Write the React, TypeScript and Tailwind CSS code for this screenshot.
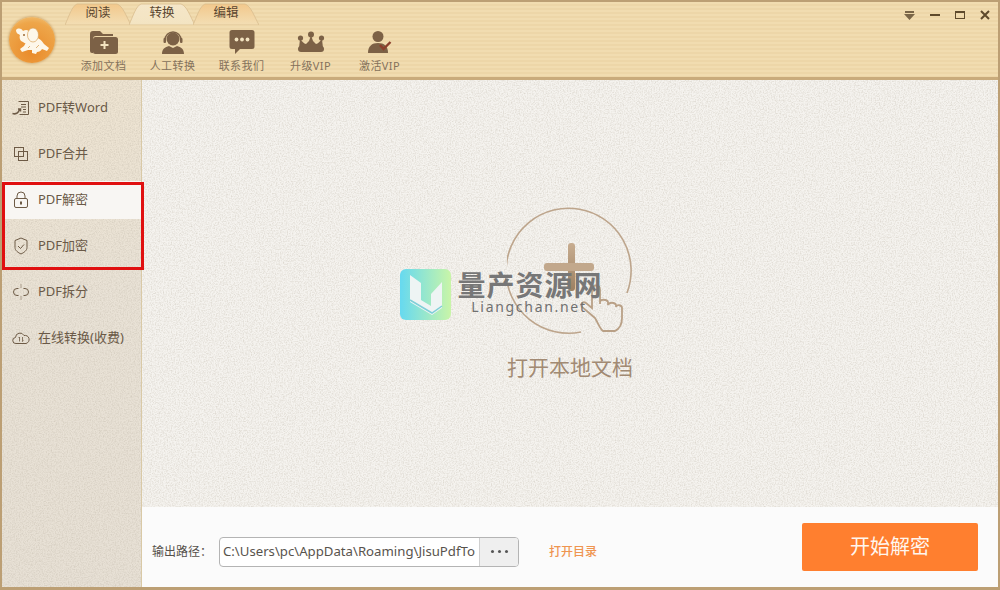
import React from 'react';

const font = "font-['Noto_Sans','Noto_Sans_CJK_SC',sans-serif]";

// paper grain used on the sidebar and the main panel
const Grain = ({ id }: { id: string }) => (
  <svg className="pointer-events-none absolute inset-0 h-full w-full">
    <filter id={id} x="0" y="0" width="100%" height="100%">
      <feTurbulence type="fractalNoise" baseFrequency="0.75" numOctaves="2" seed="4" />
      <feColorMatrix values="0 0 0 0 0.45  0 0 0 0 0.40  0 0 0 0 0.32  0.7 0 0 0 -0.27" />
    </filter>
    <rect width="100%" height="100%" filter={`url(#${id})`} />
  </svg>
);

const Tab = ({ label, active }: { label: string; active?: boolean }) => (
  <div className="relative -mr-[2px] flex h-[23px] w-[66px] items-center justify-center">
    <svg viewBox="0 0 66 23" className="absolute inset-0 h-full w-full">
      <defs>
        <linearGradient id="tabOff" x1="0" y1="0" x2="0" y2="1">
          <stop offset="0" stopColor="#f2c88c" />
          <stop offset="1" stopColor="#f3deb4" />
        </linearGradient>
        <linearGradient id="tabOn" x1="0" y1="0" x2="0" y2="1">
          <stop offset="0" stopColor="#f5e6c8" />
          <stop offset="1" stopColor="#f3e4c2" />
        </linearGradient>
      </defs>
      <path
        d="M0 23 C4 14 7 4 12 2 L52 2 C58 4 61 14 66 23 Z"
        fill={active ? 'url(#tabOn)' : 'url(#tabOff)'}
        stroke="#d9bd8e"
        strokeWidth="0.8"
      />
    </svg>
    <span className="relative text-[12.5px] leading-none text-[#5a4630]">{label}</span>
  </div>
);

const FolderIcon = () => (
  <svg width="30" height="26" viewBox="0 0 30 26">
    <path d="M1 5a3 3 0 0 1 3-3h7l3 3h10v2H7a3 3 0 0 0-3 3v14H3a2 2 0 0 1-2-2z" fill="#7c6146" />
    <rect x="4" y="8" width="25" height="17" rx="2.5" fill="#7c6146" />
    <path d="M15.500 12v8M11.500 16h8" stroke="#f3e3c0" strokeWidth="2" />
  </svg>
);

const AgentIcon = () => (
  <svg width="26" height="26" viewBox="0 0 26 26">
    <path d="M5 11a8 8 0 0 1 16 0" fill="none" stroke="#7c6146" strokeWidth="1.4" />
    <circle cx="13" cy="10" r="6.500" fill="#7c6146" />
    <rect x="3.500" y="9" width="2.500" height="5" rx="1" fill="#7c6146" />
    <rect x="20" y="9" width="2.500" height="5" rx="1" fill="#7c6146" />
    <path d="M2 25c0-5 3-7 7-8l4 2 4-2c4 1 7 3 7 8z" fill="#7c6146" />
  </svg>
);

const ChatIcon = () => (
  <svg width="26" height="26" viewBox="0 0 26 26">
    <path d="M3 1h20a2.500 2.500 0 0 1 2.500 2.500v14A2.500 2.500 0 0 1 23 20H11l-5 5v-5H3a2.500 2.500 0 0 1-2.500-2.500v-14A2.500 2.500 0 0 1 3 1z" fill="#7c6146" />
    <circle cx="7.500" cy="10.500" r="1.900" fill="#f3e3c0" />
    <circle cx="13" cy="10.500" r="1.900" fill="#f3e3c0" />
    <circle cx="18.500" cy="10.500" r="1.900" fill="#f3e3c0" />
  </svg>
);

const CrownIcon = () => (
  <svg width="28" height="22" viewBox="0 0 28 22">
    <circle cx="14" cy="3.500" r="3" fill="#7c6146" />
    <circle cx="3.500" cy="7" r="2.600" fill="#7c6146" />
    <circle cx="24.500" cy="7" r="2.600" fill="#7c6146" />
    <path d="M3 8c2 2 4 5 6 5l3-3 2-6 2 6 3 3c2 0 4-3 6-5l1 9H2z" fill="#7c6146" />
    <rect x="1" y="15" width="26" height="6" rx="3" fill="#7c6146" />
  </svg>
);

const ActivateIcon = () => (
  <svg width="26" height="24" viewBox="0 0 26 24">
    <circle cx="11" cy="6.500" r="5.500" fill="#7c6146" />
    <path d="M1 23c0-7 4-10 10-10s10 3 10 10z" fill="#7c6146" />
    <path d="M13 15l3.500 4 7-7" fill="none" stroke="#8c3f2b" strokeWidth="2.400" />
  </svg>
);

const Elephant = () => (
  <svg width="34" height="27" viewBox="0 0 34 27">
    {/* body, legs, tail */}
    <path d="M14 10c6-2 12 2 15 7l5 4-2 3-5-2c-1 2-3 3-5 3l-1 2-4-1 0-3-4 0-6 2-2-3 4-3z" fill="#fdf7ea" />
    {/* head + trunk */}
    <path d="M1 3c2-2 5-2 7 1 3-2 6-1 7 2v8c-2 3-5 3-7 1-3-1-4-4-3-7-1-1-4-1-4-5z" fill="#fdf7ea" />
    {/* ear */}
    <ellipse cx="18" cy="8" rx="5.500" ry="7" fill="#fdf7ea" stroke="#d9a25a" strokeWidth="0.7" />
    <circle cx="9" cy="8" r="1" fill="#9a6a34" />
    <path d="M24 18l-3 3M15 19l-2 2" stroke="#d9a25a" strokeWidth="0.8" />
  </svg>
);

const tools = [
  { label: '添加文档', icon: <FolderIcon /> },
  { label: '人工转换', icon: <AgentIcon /> },
  { label: '联系我们', icon: <ChatIcon /> },
  { label: '升级VIP', icon: <CrownIcon /> },
  { label: '激活VIP', icon: <ActivateIcon /> },
];

const stroke = { fill: 'none', stroke: '#6d5a45', strokeWidth: 1 };

const menu = [
  {
    label: 'PDF转Word',
    icon: (
      <svg width="18" height="16" viewBox="0 0 18 16">
        <path d="M6.500 1.500h10v13h-9M9 4.500h5M9 7h5M11 9.500h3M11 12h3" {...stroke} />
        <path d="M0.500 13.500c3 1 5.500 0 7-4M6 9h2.500v2.500" {...stroke} strokeWidth={1.5} />
      </svg>
    ),
  },
  {
    label: 'PDF合并',
    icon: (
      <svg width="16" height="16" viewBox="0 0 16 16">
        <rect x="1.500" y="1.500" width="9" height="9" {...stroke} />
        <rect x="5.500" y="5.500" width="9" height="9" {...stroke} />
      </svg>
    ),
  },
  {
    label: 'PDF解密',
    active: true,
    icon: (
      <svg width="16" height="18" viewBox="0 0 16 18">
        <rect x="1.500" y="7.500" width="13" height="9" rx="1.500" {...stroke} />
        <path d="M4 7.500V5a4 4 0 0 1 8 0v2.500" {...stroke} />
        <rect x="7" y="10.500" width="2" height="3" fill="#6d5a45" />
      </svg>
    ),
  },
  {
    label: 'PDF加密',
    icon: (
      <svg width="16" height="18" viewBox="0 0 16 18">
        <path d="M8 1l6 2.500v7c0 3-3 5-6 6.500-3-1.500-6-3.500-6-6.500v-7z" {...stroke} />
        <path d="M5 9l2.500 2.500L11 7.500" {...stroke} />
      </svg>
    ),
  },
  {
    label: 'PDF拆分',
    icon: (
      <svg width="16" height="16" viewBox="0 0 16 16">
        <path d="M5.500 4.500H4a3.500 3.500 0 0 0 0 7h1.500M10.500 4.500H12a3.500 3.500 0 0 1 0 7h-1.500" {...stroke} />
        <path d="M8 0.500v3M8 12.500v3" {...stroke} strokeDasharray="1 1" />
      </svg>
    ),
  },
  {
    label: '在线转换(收费)',
    icon: (
      <svg width="18" height="14" viewBox="0 0 18 14">
        <path d="M5 12.500H4a3 3 0 0 1-.5-6A4.500 4.500 0 0 1 12 4.500a4 4 0 0 1 2 8z" {...stroke} />
        <path d="M7.500 6v4.500M6.500 7l1-1M10.500 6v4.500M11.500 9.500l-1 1" {...stroke} strokeWidth={0.8} />
      </svg>
    ),
  },
];

export default function App() {
  return (
    <div className={`${font} relative flex h-[590px] w-[1000px] flex-col overflow-hidden border-2 border-b-[3px] border-[#bc9f74] bg-[#f0eeea]`}>
      {/* header */}
      <header className="flex h-[78px] shrink-0 border-b-[3px] border-[#c9ab7c] bg-[repeating-linear-gradient(180deg,#f1dcb0_0px,#f1dcb0_2px,#edd6a8_2px,#edd6a8_4px)]">
        <div className="flex w-[63px] items-center pl-[7px]">
          <div className="mt-[1px] flex h-[46px] w-[46px] items-center justify-center rounded-full bg-[radial-gradient(circle_at_50%_75%,#e98a2a,#eea64a_70%,#f3cd89)] shadow-[0_0_3px_#b98a4a]">
            <Elephant />
          </div>
        </div>
        <div className="flex flex-1 flex-col">
          <div className="flex">
            <Tab label="阅读" />
            <Tab label="转换" active />
            <Tab label="编辑" />
          </div>
          <div className="flex pt-[3px] pl-[4px]">
            {tools.map((t) => (
              <div key={t.label} className="flex w-[69px] flex-col items-center">
                <div className="flex h-[28px] items-center justify-center">{t.icon}</div>
                <span className="mt-[3px] text-[11px] leading-[14px] tracking-[0.4px] whitespace-nowrap text-[#84715b]">{t.label}</span>
              </div>
            ))}
          </div>
        </div>
        <div className="flex h-[26px] items-center gap-[15px] pr-[8px]">
          <svg width="11" height="9" viewBox="0 0 11 9">
            <path d="M1 0h9v2H1zM0 3h11L5.500 9z" fill="#7a6648" />
          </svg>
          <div className="h-[2px] w-[10px] bg-[#5e4a2c]" />
          <div className="h-[8px] w-[10px] border border-t-2 border-[#5e4a2c]" />
          <svg width="10" height="10" viewBox="0 0 10 10">
            <path d="M1 1l8 8M9 1l-8 8" stroke="#5e4a2c" strokeWidth="2" />
          </svg>
        </div>
      </header>

      <div className="flex min-h-0 flex-1">
        {/* sidebar */}
        <aside className="relative w-[140px] shrink-0 border-r border-[#d9c9a6] bg-[linear-gradient(160deg,#efe4d0_0%,#e9e2d6_45%,#e7e0d5_100%)] pt-[5px]">
          <Grain id="grainSide" />
          {menu.map((m) => (
            <div key={m.label} className="flex h-[46px] items-center">
              <div className={`relative flex h-[38px] w-full items-center gap-[7px] pl-[9px] text-[13px] whitespace-nowrap text-[#6a5947] ${m.active ? 'bg-[#f8f6f3]' : ''}`}>
                <span className="flex w-[20px] justify-center">{m.icon}</span>
                <span>{m.label}</span>
              </div>
            </div>
          ))}
        </aside>

        {/* main */}
        <main className="flex min-w-0 flex-1 flex-col">
          <div className="relative flex flex-1 flex-col items-center bg-[#f5f3ef] pt-[127px]">
            <Grain id="grainMain" />
            <svg width="128" height="128" viewBox="0 0 128 128" className="relative ml-[2px]">
              <defs>
                <linearGradient id="plusV" x1="0" y1="0" x2="0" y2="1">
                  <stop offset="0" stopColor="#c8ad90" />
                  <stop offset="1" stopColor="#9c8062" />
                </linearGradient>
              </defs>
              <path d="M120 86A62.500 62.500 0 1 0 74 125" fill="none" stroke="#bda58c" strokeWidth="1.6" />
              <rect x="61" y="36" width="7" height="48" rx="3" fill="url(#plusV)" />
              <rect x="37" y="56" width="50" height="8" rx="3" fill="#c2a88c" />
              <path
                d="M88 111L75 100c-2-3 1-6 4-4l6 5V83c0-6 8-6 8 0v14 -2c0-3 7-3 8 0v3c1-3 7-3 8 0v2c1-3 6-2 6 1v10c0 7-3 11-7 13H96c-3-2-5-8-8-13z"
                fill="none"
                stroke="#b9a086"
                strokeWidth="1.8"
              />
            </svg>
            <span className="relative mt-[18px] text-[21px] leading-[29px] text-[#a28a73]">打开本地文档</span>
          </div>
          <div className="flex h-[80px] shrink-0 items-center bg-[#fbfbfb] pr-[20px] pl-[10px]">
            <div className="mt-[9px] flex items-center">
              <span className="w-[67px] text-[12px] whitespace-nowrap text-[#55504a]">输出路径：</span>
              <div className="flex h-[30px] w-[300px] items-stretch overflow-hidden rounded-[4px] border border-[#b4b4b4] bg-white">
                <div className="min-w-0 flex-1 overflow-hidden pl-[3px] text-[13.200px] leading-[27px] whitespace-nowrap text-[#58534d]">C:\Users\pc\AppData\Roaming\JisuPdfTo</div>
                <div className="flex w-[39px] items-center justify-center gap-[4px] border-l border-[#cfcfcf] bg-[#efefef]">
                  <i className="h-[3px] w-[3px] rounded-full bg-[#555]" />
                  <i className="h-[3px] w-[3px] rounded-full bg-[#555]" />
                  <i className="h-[3px] w-[3px] rounded-full bg-[#555]" />
                </div>
              </div>
              <span className="ml-[30px] text-[12px] font-medium text-[#ef9550]">打开目录</span>
            </div>
            <button className="ml-auto h-[48px] w-[176px] rounded-[2px] bg-[#ff7f2f] text-[20px] text-[#fff6ee]">开始解密</button>
          </div>
        </main>
      </div>

      {/* red annotation drawn over the screenshot */}
      <div className="absolute top-[180px] left-0 h-[88px] w-[142px] border-[3px] border-[#e01010]" />

      {/* watermark */}
      <div className="absolute top-[267px] left-[398px] flex items-start gap-[7px]">
        <div className="flex h-[51px] w-[51px] items-center justify-center rounded-[6px] bg-[linear-gradient(90deg,#66d9f0,#c9f5a8)]">
          <svg width="38" height="44" viewBox="0 0 38 44">
            <path d="M3 2l11 8v17l10 6V21l11-12v26l-10 7L3 29z" fill="#eef4f4" />
            <path d="M3 27l22 13 10-7" fill="none" stroke="#7fcfd8" strokeWidth="1.500" />
          </svg>
        </div>
        <div className="flex w-[144px] flex-col items-center pt-[4px] text-[#777]">
          <span className="text-[28px] leading-[24px] font-bold tracking-[1px] whitespace-nowrap">量产资源网</span>
          <span className="mt-[2px] ml-[-2px] text-[14px] leading-[16px] tracking-[1.700px] text-[#707070]">Liangchan.net</span>
        </div>
      </div>
    </div>
  );
}
